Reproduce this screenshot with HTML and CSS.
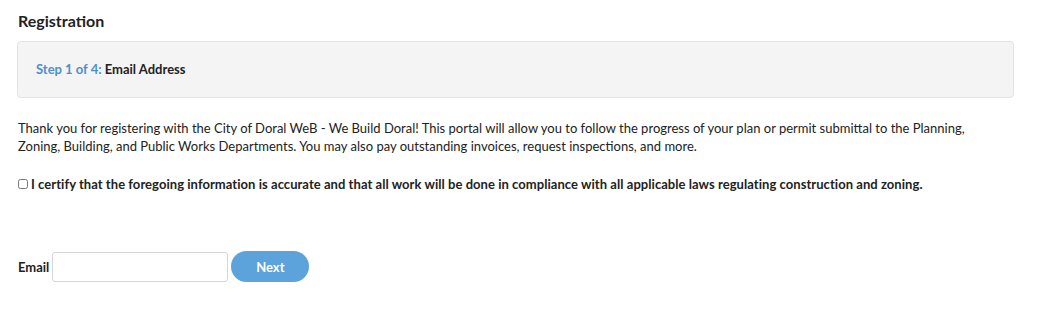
FILE: index.html
```html
<!DOCTYPE html>
<html lang="en">
<head>
    <meta charset="UTF-8">
    <meta name="viewport" content="width=device-width, initial-scale=1.0">
    <title>Registration</title>
    <link rel="stylesheet" href="styles.css">
</head>
<body>
<div class="page">
    <h2 class="title">Registration</h2>

    <!-- Step panel -->
    <div class="step-panel">
        <span class="step-count">Step 1 of 4:</span> Email Address
    </div>

    <p class="intro">Thank you for registering with the City of Doral WeB - We Build Doral! This portal will allow you to follow the progress of your plan or permit submittal to the Planning, Zoning, Building, and Public Works Departments. You may also pay outstanding invoices, request inspections, and more.</p>

    <label class="certify">
        <input type="checkbox" class="certify-box">
        I certify that the foregoing information is accurate and that all work will be done in compliance with all applicable laws regulating construction and zoning.
    </label>

    <form class="email-row" onsubmit="return false;">
        <label for="email" class="email-label">Email</label>
        <input type="text" id="email" class="email-input">
        <button type="submit" class="next-btn">Next</button>
    </form>
</div>
</body>
</html>
```

FILE: styles.css
```css
body {
    font-family: Lato, "Open Sans", sans-serif;
    background-color: #fff;
    color: #222;
    margin: 0;
    padding: 0;
}

.page {
    width: 997px;
    padding: 10px 0 0 17px;
}

.title {
    font-size: 16px;
    font-weight: bold;
    margin: 0 0 9px 1px;
    line-height: 22px;
}

.step-panel {
    background-color: #f4f4f4;
    border: 1px solid #e3e3e3;
    border-radius: 4px;
    padding: 18px 18px 19px;
    font-size: 13px;
    font-weight: bold;
    line-height: 18px;
}

.step-count {
    color: #4a90cf;
}

.intro {
    max-width: 965px;
    font-size: 13px;
    line-height: 18px;
    margin: 21px 0 0 1px;
    color: #222;
}

.certify {
    display: flex;
    align-items: center;
    gap: 3px;
    font-size: 13px;
    font-weight: bold;
    line-height: 18px;
    margin: 20px 0 0 1px;
    letter-spacing: 0.05px;
}

.certify-box {
    width: 10px;
    height: 10px;
    margin: 0;
}

.email-row {
    display: flex;
    align-items: center;
    margin: 58px 0 0 1px;
}

.email-label {
    font-size: 13px;
    font-weight: bold;
    margin-right: 3px;
}

.email-input {
    width: 176px;
    height: 30px;
    box-sizing: border-box;
    border: 1px solid #d6d6d6;
    border-radius: 3px;
    padding: 4px 6px;
    margin: 0;
}

.next-btn {
    width: 78px;
    height: 31px;
    margin-left: 3px;
    border: none;
    border-radius: 16px;
    background-color: #5ba3da;
    color: #fff;
    font-family: Lato, sans-serif;
    font-size: 13px;
    font-weight: bold;
}
```
